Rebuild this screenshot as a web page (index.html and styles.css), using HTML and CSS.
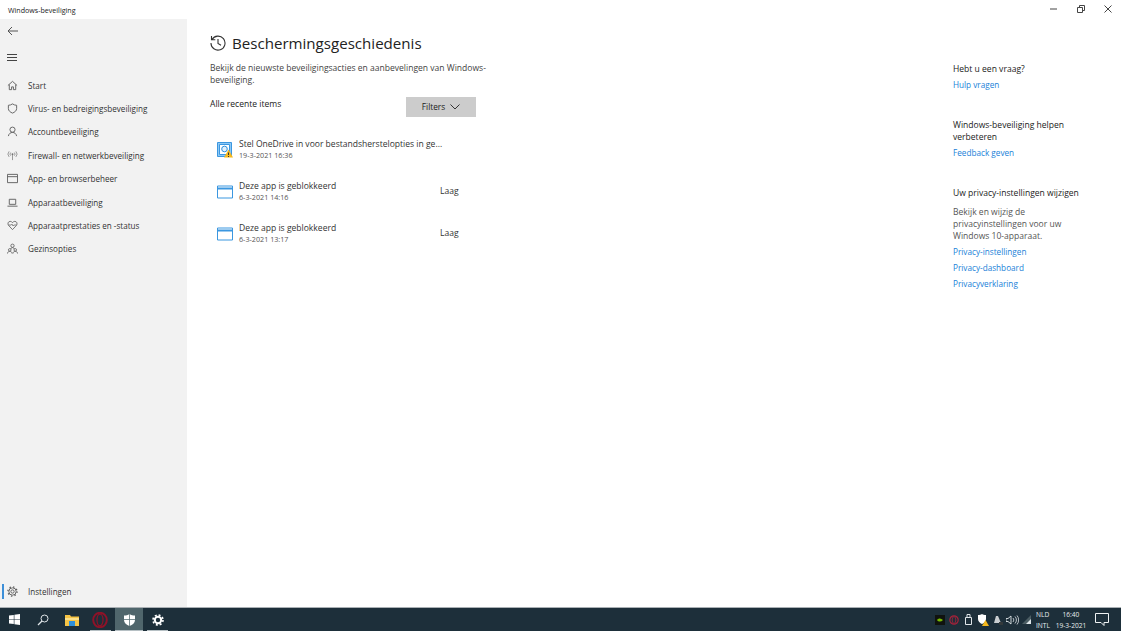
FILE: index.html
```html
<!DOCTYPE html>
<html lang="nl">
<head>
    <meta charset="UTF-8">
    <title>Windows-beveiliging</title>
    <link rel="stylesheet" href="styles.css">
</head>
<body>
    <div class="titlebar">
        <span class="app-name">Windows-beveiliging</span>
        <div class="win-buttons">
            <svg width="8" height="8" viewBox="0 0 8 8"><path d="M0 4h7" stroke="#444" fill="none"/></svg>
            <svg width="8" height="8" viewBox="0 0 8 8"><path d="M.5 2.500h5v5h-5zM2.500 2.500v-2h5v5h-2" stroke="#444" fill="none"/></svg>
            <svg width="8" height="8" viewBox="0 0 8 8"><path d="M.5.500l7 7M7.500.500l-7 7" stroke="#444" fill="none"/></svg>
        </div>
    </div>

    <div class="window">
        <nav class="sidebar">
            <div class="nav-top">
                <svg class="back" width="12" height="10" viewBox="0 0 12 10"><path d="M11 5H1M5 1L1 5l4 4" stroke="#555" fill="none"/></svg>
                <svg class="burger" width="10" height="7" viewBox="0 0 10 7"><path d="M0 .5h10M0 3.500h10M0 6.500h10" stroke="#444" fill="none"/></svg>
            </div>
            <ul class="nav-list">
                <li><svg viewBox="0 0 12 12"><path d="M1 6l5-4.500L11 6M2.500 5v5.500h2.500V7.500h2v3h2.500V5" stroke="#444" fill="none"/></svg>Start</li>
                <li><svg viewBox="0 0 12 12"><path d="M6 1c1.500 1 3 1.500 4.500 1.500V6c0 2.500-2 4-4.500 5-2.500-1-4.500-2.500-4.500-5V2.500C3 2.500 4.500 2 6 1z" stroke="#444" fill="none"/></svg>Virus- en bedreigingsbeveiliging</li>
                <li><svg viewBox="0 0 12 12"><circle cx="6" cy="4" r="2.800" stroke="#444" fill="none"/><path d="M1.500 11c.5-2.500 2.200-4 4.500-4s4 1.500 4.500 4" stroke="#444" fill="none"/></svg>Accountbeveiliging</li>
                <li><svg viewBox="0 0 12 12"><circle cx="6" cy="4.500" r="1" fill="#555"/><path d="M6 5v6M4 2.800a2.500 2.500 0 0 0 0 3.400M8 2.800a2.500 2.500 0 0 1 0 3.400M2.300 1.500a4.500 4.500 0 0 0 0 6M9.700 1.500a4.500 4.500 0 0 1 0 6" stroke="#666" stroke-width=".8" fill="none"/></svg>Firewall- en netwerkbeveiliging</li>
                <li><svg viewBox="0 0 12 12"><path d="M.5 1.500h11v9H.5zM.5 4h11" stroke="#444" fill="none"/></svg>App- en browserbeheer</li>
                <li><svg viewBox="0 0 12 12"><path d="M2.500 2.500h7v5.500h-7zM.5 10h11" stroke="#444" fill="none"/></svg>Apparaatbeveiliging</li>
                <li><svg viewBox="0 0 12 12"><path d="M6 10.500L1.800 6C.2 4.200 1.200 1.500 3.500 1.500c1.200 0 2 .6 2.500 1.400.5-.8 1.300-1.400 2.500-1.400 2.300 0 3.300 2.700 1.700 4.500z" stroke="#444" stroke-width=".9" fill="none"/><path d="M1.500 5.500h3l1-1 1 2 1-1h3" stroke="#444" stroke-width=".8" fill="none"/></svg>Apparaatprestaties en -status</li>
                <li><svg viewBox="0 0 12 12"><circle cx="6" cy="3" r="1.800" stroke="#444" stroke-width=".9" fill="none"/><circle cx="3" cy="7.500" r="1.400" stroke="#444" stroke-width=".9" fill="none"/><circle cx="9" cy="7.500" r="1.400" stroke="#444" stroke-width=".9" fill="none"/><path d="M.5 11.500c0-1.500 1-2.300 2.500-2.300s2.500.8 2.500 2.300M6.500 11.500c0-1.500 1-2.300 2.500-2.300s2.500.8 2.500 2.300M4 6.500c.3-1 1-1.500 2-1.500s1.700.5 2 1.500" stroke="#444" stroke-width=".9" fill="none"/></svg>Gezinsopties</li>
            </ul>
            <div class="nav-bottom">
                <span class="accent"></span>
                <svg viewBox="0 0 12 12"><circle cx="6" cy="6" r="1.800" stroke="#444" fill="none"/><circle cx="6" cy="6" r="4" stroke="#444" fill="none"/><circle cx="6" cy="6" r="5" stroke="#444" stroke-width="1.400" stroke-dasharray="1.500 2.430" fill="none"/></svg>
                Instellingen
            </div>
        </nav>

        <main class="content">
            <section class="history">
                <h1><svg width="17" height="16" viewBox="0 0 17 16"><path d="M3 4.500A7 7 0 1 1 2 8M2.500 1v3.800h3.800M9 4v4.500l3 1.800" stroke="#333" stroke-width="1.100" fill="none"/></svg>Beschermingsgeschiedenis</h1>
                <p class="intro">Bekijk de nieuwste beveiligingsacties en aanbevelingen van Windows-beveiliging.</p>
                <div class="filter-row">
                    <span>Alle recente items</span>
                    <button class="filters">Filters
                        <svg width="10" height="6" viewBox="0 0 10 6"><path d="M.5.500L5 5 9.500.500" stroke="#333" fill="none"/></svg>
                    </button>
                </div>
                <div class="item first">
                    <svg class="item-icon" width="16" height="16" viewBox="0 0 16 16">
                        <path d="M.5.500h14v14H.5z" fill="#8cc8f5" stroke="#3b97e0"/>
                        <path d="M2.500 2.500h10v10h-10z" fill="#fff" stroke="#3b97e0"/>
                        <circle cx="7.500" cy="7" r="2.800" fill="#e3f2fd" stroke="#2e8fdc"/>
                        <path d="M11.500 7.500l4.500 8H7z" fill="#f6b91d"/>
                        <path d="M11.500 10.500v2.500M11.500 14v1" stroke="#333"/>
                    </svg>
                    <div class="item-text">
                        <div class="item-title">Stel OneDrive in voor bestandsherstelopties in ge...</div>
                        <div class="item-date">19-3-2021 16:36</div>
                    </div>
                </div>
                <div class="item">
                    <svg class="item-icon" width="16" height="14" viewBox="0 0 16 14"><path d="M.5 1h15v12H.5z" fill="#fff" stroke="#3b97e0"/><path d="M.5 3.500h15" stroke="#3b97e0" stroke-width="2"/></svg>
                    <div class="item-text">
                        <div class="item-title">Deze app is geblokkeerd</div>
                        <div class="item-date">6-3-2021 14:16</div>
                    </div>
                    <span class="level">Laag</span>
                </div>
                <div class="item">
                    <svg class="item-icon" width="16" height="14" viewBox="0 0 16 14"><path d="M.5 1h15v12H.5z" fill="#fff" stroke="#3b97e0"/><path d="M.5 3.500h15" stroke="#3b97e0" stroke-width="2"/></svg>
                    <div class="item-text">
                        <div class="item-title">Deze app is geblokkeerd</div>
                        <div class="item-date">6-3-2021 13:17</div>
                    </div>
                    <span class="level">Laag</span>
                </div>
            </section>

            <aside class="help">
                <div class="help-block">
                    <h2>Hebt u een vraag?</h2>
                    <a href="#">Hulp vragen</a>
                </div>
                <div class="help-block">
                    <h2>Windows-beveiliging helpen verbeteren</h2>
                    <a href="#">Feedback geven</a>
                </div>
                <div class="help-block">
                    <h2>Uw privacy-instellingen wijzigen</h2>
                    <p>Bekijk en wijzig de privacyinstellingen voor uw Windows 10-apparaat.</p>
                    <a href="#">Privacy-instellingen</a>
                    <a href="#">Privacy-dashboard</a>
                    <a href="#">Privacyverklaring</a>
                </div>
            </aside>
        </main>
    </div>

    <footer class="taskbar">
        <div class="task-left">
            <span class="task-btn"><svg width="11" height="11" viewBox="0 0 11 11"><path d="M0 1.600L4.800.9v4.300H0zM5.400.8L11 0v5.200H5.400zM0 5.800h4.800v4.300L0 9.400zM5.400 5.800H11V11l-5.600-.8z" fill="#fff"/></svg></span>
            <span class="task-btn"><svg width="12" height="12" viewBox="0 0 12 12"><circle cx="7.500" cy="4.500" r="3.500" stroke="#dfe5e8" fill="none"/><path d="M5 7l-4 4" stroke="#dfe5e8" stroke-width="1.200"/></svg></span>
            <span class="task-btn"><svg width="14" height="12" viewBox="0 0 14 12"><path d="M0 1h5l1 1.500h8V12H0z" fill="#f5c445"/><path d="M0 4h14v2H0z" fill="#fbe08a"/><path d="M4 7h6v5H4z" fill="#2f8fd8"/></svg></span>
            <span class="task-btn open"><svg width="16" height="16" viewBox="0 0 16 16"><ellipse cx="8" cy="8" rx="6.800" ry="7.200" fill="none" stroke="#8e1228" stroke-width="2"/><ellipse cx="8" cy="8" rx="3" ry="5.800" fill="none" stroke="#8e1228" stroke-width="1.200"/></svg></span>
            <span class="task-btn open active"><svg width="11" height="12" viewBox="0 0 11 12"><path d="M5.500 0c1.500 1 3.500 1.500 5.500 1.500V6c0 3-2.500 5-5.500 6C2.500 11 0 9 0 6V1.500C2 1.500 4 1 5.500 0z" fill="#fff"/><path d="M5.500 0v12M0 5.500h11" stroke="#5b7378" stroke-width=".8"/></svg></span>
            <span class="task-btn open"><svg width="12" height="12" viewBox="0 0 12 12"><circle cx="6" cy="6" r="3.200" fill="none" stroke="#fff" stroke-width="2"/><circle cx="6" cy="6" r="5" fill="none" stroke="#fff" stroke-width="1.600" stroke-dasharray="2 1.930"/></svg></span>
        </div>
        <div class="tray">
            <span class="tray-icon"><svg width="10" height="10" viewBox="0 0 10 10"><path d="M0 0h10v10H0z" fill="#10130f"/><path d="M2 5c1.500-2 4-2 6 0-2 2-4.500 2-6 0z" fill="#76b900"/></svg></span>
            <span class="tray-icon"><svg width="10" height="10" viewBox="0 0 10 10"><circle cx="5" cy="5" r="4.200" fill="none" stroke="#a5223a" stroke-width="1.200"/><ellipse cx="5" cy="5" rx="1.800" ry="3.400" fill="none" stroke="#a5223a" stroke-width=".8"/></svg></span>
            <span class="tray-icon"><svg width="9" height="11" viewBox="0 0 9 11"><path d="M1.500 3.500h6v7h-6zM3 3.500V.5h3v3" fill="none" stroke="#dfe5e8"/></svg></span>
            <span class="tray-icon"><svg width="12" height="12" viewBox="0 0 12 12"><path d="M5 0c1 .7 2.500 1 4 1v4c0 2.500-2 4-4 5-2-1-4-2.500-4-5V1c1.500 0 3-.3 4-1z" fill="#fff"/><path d="M8.500 6l3.500 6H5z" fill="#f6b91d"/></svg></span>
            <span class="tray-icon"><svg width="11" height="11" viewBox="0 0 11 11"><path d="M2 9l2-7h2l3 7z" fill="#c9ced0"/><path d="M7 8h4v3H7z" fill="#33393b"/></svg></span>
            <span class="tray-icon"><svg width="13" height="10" viewBox="0 0 13 10"><path d="M0 3.500h2L5 1v8L2 6.500H0z" fill="none" stroke="#dfe5e8" stroke-width=".9"/><path d="M7 3a3 3 0 0 1 0 4M9 1.500a5 5 0 0 1 0 7M11 .5a7 7 0 0 1 0 9" fill="none" stroke="#dfe5e8" stroke-width=".8"/></svg></span>
            <span class="tray-icon"><svg width="10" height="9" viewBox="0 0 10 9"><path d="M0 9l9-9v9z" fill="#4b5d63"/><path d="M4 9l5-5v5z" fill="#dfe5e8"/></svg></span>
            <div class="lang">NLD<br>INTL</div>
            <div class="clock">16:40<br>19-3-2021</div>
            <svg class="notify" width="14" height="13" viewBox="0 0 14 13"><path d="M.5.500h13v9H9v3l-3-3H.5z" fill="none" stroke="#eef2f3"/></svg>
        </div>
    </footer>
</body>
</html>
```

FILE: styles.css
```css
* {
    box-sizing: border-box;
}
html, body {
    height: 100%;
}
body {
    margin: 0;
    height: 631px;
    overflow: hidden;
    display: flex;
    flex-direction: column;
    font-family: "Open Sans", "Noto Sans", sans-serif;
    font-size: 8.55px;
    color: #333;
    background: #fff;
}
.titlebar {
    height: 19px;
    flex: none;
    display: flex;
    justify-content: space-between;
    align-items: center;
    padding-left: 8px;
    font-size: 7.1px;
    color: #222;
}
.win-buttons {
    display: flex;
    gap: 19px;
    padding-right: 9px;
    margin-top: -2px;
}
.win-buttons svg {
    display: block;
}
.window {
    flex: 1;
    display: flex;
    min-height: 0;
}

/* sidebar */
.sidebar {
    width: 187px;
    flex: none;
    background: #f2f2f2;
    display: flex;
    flex-direction: column;
    font-size: 8.1px;
}
.sidebar li svg, .nav-bottom svg {
    width: 11px;
    height: 11px;
    margin-left: 1px;
    flex: none;
    opacity: 0.85;
}
.nav-top {
    display: flex;
    flex-direction: column;
    align-items: flex-start;
    padding: 7px 0 0 7px;
    height: 54.5px;
}
.nav-top .burger {
    margin: 18px 0 0 0;
}
.nav-list {
    list-style: none;
    margin: 0;
    padding: 0;
}
.nav-list li {
    display: flex;
    align-items: center;
    gap: 10px;
    height: 23.4px;
    padding-left: 6px;
}
.nav-bottom {
    margin-top: auto;
    height: 23px;
    margin-bottom: 4px;
    display: flex;
    align-items: center;
    gap: 10px;
    padding-left: 6px;
    position: relative;
}
.accent {
    position: absolute;
    left: 2px;
    top: 4px;
    width: 2px;
    height: 15px;
    background: #3d8fd8;
}

/* content */
.content {
    flex: 1;
    display: flex;
    justify-content: space-between;
    padding: 0 0 0 23px;
}
.history {
    width: 266px;
}
h1 {
    display: flex;
    align-items: center;
    gap: 5px;
    margin: 13px 0 0 -1px;
    height: 22px;
    font-size: 15.1px;
    font-weight: 400;
    color: #222;
}
h1 svg {
    margin-right: 1px;
}
.intro {
    margin: 8px 0 0 0;
    line-height: 12.4px;
    color: #444;
    width: 285px;
}
.filter-row {
    display: flex;
    justify-content: space-between;
    margin-top: 10px;
    color: #222;
}
.filter-row span {
    padding-top: 1px;
}
.filters {
    width: 70px;
    height: 20px;
    border: none;
    background: #ccc;
    font: inherit;
    font-size: 8.3px;
    color: #222;
    display: flex;
    align-items: center;
    justify-content: center;
    gap: 5px;
}
.item {
    display: flex;
    align-items: center;
    height: 42px;
    position: relative;
    padding-left: 7px;
}
.item.first {
    margin-top: 12px;
}
.item-icon {
    margin-right: 6px;
    flex: none;
}
.item-title {
    line-height: 12px;
    color: #333;
}
.item-date {
    font-size: 7.2px;
    line-height: 11px;
    color: #555;
}
.level {
    position: absolute;
    left: 230px;
    top: 14px;
}

/* right column */
.help {
    width: 168px;
    padding-top: 44px;
}
.help-block {
    margin-bottom: 28px;
    width: 135px;
}
.help-block h2 {
    margin: 0;
    font-size: 8.55px;
    font-weight: 400;
    line-height: 12px;
    color: #222;
}
.help-block p {
    margin: 7px 0 0 0;
    line-height: 12px;
    color: #555;
}
.help-block a {
    display: block;
    margin-top: 4px;
    font-size: 8.2px;
    line-height: 12px;
    color: #1a7fd8;
    text-decoration: none;
}

/* taskbar */
.taskbar {
    height: 24px;
    flex: none;
    display: flex;
    justify-content: space-between;
    background: #1d2f3a;
    border-top: 1px solid #aab0b4;
    color: #e8eced;
}
.task-left {
    display: flex;
}
.task-btn {
    width: 28.7px;
    display: flex;
    align-items: center;
    justify-content: center;
    position: relative;
}
.task-btn.open::after {
    content: "";
    position: absolute;
    left: 4px;
    right: 4px;
    bottom: 0;
    height: 1px;
    background: #b6c0c4;
}
.task-btn.active {
    background: #50666c;
}
.task-btn.active::after {
    left: 0;
    right: 0;
}
.tray {
    display: flex;
    align-items: center;
    padding-right: 12px;
    font-size: 6.6px;
    line-height: 11px;
}
.tray-icon {
    width: 14.5px;
    display: flex;
    justify-content: center;
}
.lang {
    margin-left: 2px;
    width: 15px;
}
.clock {
    margin-left: 4px;
    text-align: center;
    width: 32px;
}
.notify {
    margin-left: 8px;
}
```
